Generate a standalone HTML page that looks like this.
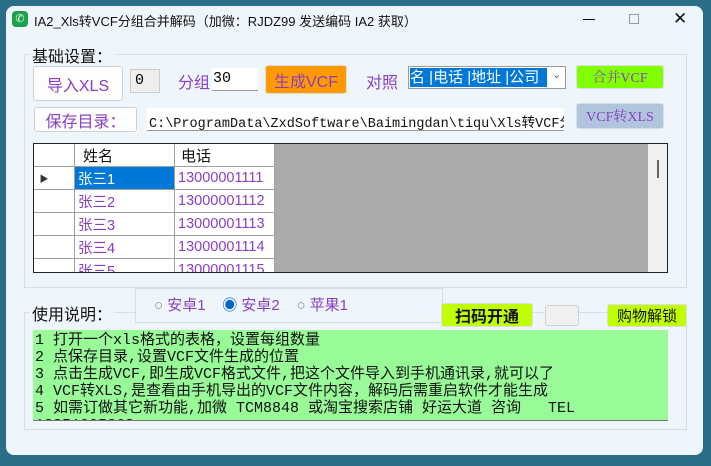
<!DOCTYPE html>
<html><head><meta charset="utf-8"><style>
*{margin:0;padding:0;box-sizing:border-box}
body{width:711px;height:466px;background:#2b6e88;position:relative;overflow:hidden;font-family:"Liberation Sans","Noto Sans CJK SC",sans-serif}
.win{position:absolute;left:6px;top:6px;width:697px;height:449px;background:#eef5fb;border-radius:8px}
.a{position:absolute}
.btn{position:absolute;background:#fdfdfd;border:1px solid #d0d0d0;border-radius:3px;display:flex;align-items:center;justify-content:center;font-size:16px;color:#8a3fc0}
.grp{position:absolute;border:1px solid #d5dde5}
.lbl{position:absolute;background:#eef5fb;font-size:16px;color:#111;padding:0 3px}
.mono{font-family:"Liberation Mono","Noto Sans CJK SC",monospace}
td{border:1px solid #a0a0a0;font-size:14.5px;color:#8a3fc0;height:23px;padding-left:3px;white-space:nowrap;overflow:hidden}
</style></head><body>
<div class="win"></div>
<div class="a" style="left:12px;top:11px;width:16px;height:16px;background:#1aa34a;border-radius:4px;color:#fff;font-size:11px;text-align:center;line-height:16px">✆</div>
<div class="a" style="left:34px;top:11px;font-size:13px;color:#111">IA2_Xls转VCF分组合并解码（加微：RJDZ99 发送编码 IA2 获取）</div>
<div class="a" style="left:583px;top:19px;width:12px;height:1px;background:#111"></div>
<div class="a" style="left:629px;top:14px;width:10px;height:10px;border:1px solid #999"></div>
<div class="a" style="left:673px;top:9px;font-size:17px;color:#111">✕</div>
<div class="grp" style="left:24px;top:54px;width:663px;height:234px"></div>
<div class="lbl" style="left:29px;top:43px">基础设置：</div>
<div class="btn" style="left:33px;top:66px;width:90px;height:35px">导入XLS</div>
<div class="a mono" style="left:130px;top:69px;width:30px;height:24px;background:#eee;border:1px solid #ccc;font-size:15px;padding:2px 4px">0</div>
<div class="a" style="left:178px;top:69px;font-size:16px;color:#8a3fc0">分组</div>
<div class="a mono" style="left:212px;top:68px;width:46px;height:23px;background:#fff;border-bottom:1px solid #999;font-size:15px;padding:2px 1px">30</div>
<div class="btn" style="left:265px;top:65px;width:82px;height:29px;background:#ff9900;border-color:#ddd">生成VCF</div>
<div class="a" style="left:366px;top:69px;font-size:16px;color:#8a3fc0">对照</div>
<div class="a" style="left:408px;top:66px;width:158px;height:23px;background:#fff;border:1px solid #999"></div>
<div class="a" style="left:410px;top:68px;width:137px;height:19px;background:#0078d7;color:#fff;font-size:15px;line-height:19px;white-space:nowrap;overflow:hidden">名 |电话 |地址 |公司</div>
<div class="a" style="left:552px;top:68px;font-size:11px;color:#666">⌄</div>
<div class="btn" style="left:576px;top:65px;width:88px;height:24px;background:#80ff00;border-color:#ddd;font-family:'Liberation Serif','Noto Serif CJK SC',serif;font-size:14px">合并VCF</div>
<div class="btn" style="left:34px;top:107px;width:103px;height:25px">保存目录：</div>
<div class="a mono" style="left:147px;top:108px;width:417px;height:23px;background:#fff;border-bottom:1px solid #999;font-size:13.5px;padding:3px 2px;white-space:nowrap;overflow:hidden;color:#111">C:\ProgramData\ZxdSoftware\Baimingdan\tiqu\Xls转VCF分</div>
<div class="btn" style="left:576px;top:103px;width:88px;height:26px;background:#b0c4de;border-color:#ddd;font-family:'Liberation Serif','Noto Serif CJK SC',serif;font-size:14px">VCF转XLS</div>
<div class="a" style="left:33px;top:143px;width:635px;height:130px;background:#ababab;border:1px solid #222;overflow:hidden">
<table style="border-collapse:collapse;background:#fff;position:absolute;left:-1px;top:-1px">
<tr><td style="width:41px;color:#000"></td><td style="width:100px;color:#111;padding-left:8px;font-size:15px">姓名</td><td style="width:100px;color:#111;padding-left:6px;font-size:15px">电话</td></tr>
<tr><td style="font-size:9px;color:#333">&nbsp;▶</td><td style="background:#0078d7;color:#fff">张三1</td><td>13000001111</td></tr>
<tr><td></td><td>张三2</td><td>13000001112</td></tr>
<tr><td></td><td>张三3</td><td>13000001113</td></tr>
<tr><td></td><td>张三4</td><td>13000001114</td></tr>
<tr><td></td><td>张三5</td><td>13000001115</td></tr>
</table>
<div class="a" style="left:614px;top:0;width:20px;height:130px;background:#f0f0f0"></div>
<div class="a" style="left:623px;top:16px;width:2px;height:18px;background:#666"></div>
</div>
<div class="grp" style="left:24px;top:312px;width:663px;height:118px"></div>
<div class="lbl" style="left:29px;top:301px">使用说明：</div>
<div class="a" style="left:135px;top:288px;width:308px;height:35px;background:#eef5fb;border:1px solid #d5dde5"></div>
<div class="a" style="left:154px;top:294px;font-size:15px;color:#8a3fc0;white-space:nowrap"><span style="color:#888">○</span> 安卓1 &nbsp;&nbsp; <span style="color:#0064c8">◉</span> 安卓2 &nbsp;&nbsp; <span style="color:#888">○</span> 苹果1</div>
<div class="btn" style="left:441px;top:303px;width:92px;height:24px;background:#c0ff00;border-color:#ddd;color:#111;font-weight:bold;font-size:16px">扫码开通</div>
<div class="btn" style="left:545px;top:305px;width:34px;height:21px;background:#f0f0f0"></div>
<div class="btn" style="left:607px;top:304px;width:80px;height:23px;background:#c0ff00;border-color:#ddd;color:#111;font-size:15px">购物解锁</div>
<div class="a mono" style="left:33px;top:330px;width:635px;height:91px;background:#98fb98;border-bottom:1px solid #777;font-size:15px;line-height:17px;color:#111;padding:2px 2px;overflow:hidden;white-space:nowrap">
1 打开一个xls格式的表格，设置每组数量<br>2 点保存目录,设置VCF文件生成的位置<br>3 点击生成VCF,即生成VCF格式文件,把这个文件导入到手机通讯录,就可以了<br>4 VCF转XLS,是查看由手机导出的VCF文件内容，解码后需重启软件才能生成<br>5 如需订做其它新功能,加微 TCM8848 或淘宝搜索店铺 好运大道 咨询&nbsp;&nbsp; TEL<br>13851095368</div>
</body></html>
